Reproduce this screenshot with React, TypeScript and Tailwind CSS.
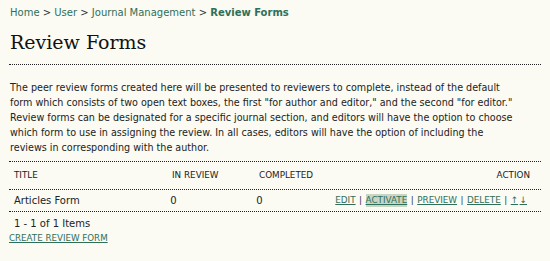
import React from "react";

const link = "text-[#2f6f5a]";

export default function App() {
  return (
    <div className="min-h-[261px] w-[550px] bg-[#fbfbf3] text-[#222] font-['DejaVu_Sans',sans-serif] text-[9.6px]">
      <div className="whitespace-nowrap pl-[10px] pt-[5px] text-[10px] leading-[15px]">
        <span className={link}>Home</span>
        <span className="text-[#333]"> &gt; </span>
        <span className={link}>User</span>
        <span className="text-[#333]"> &gt; </span>
        <span className={link}>Journal Management</span>
        <span className="text-[#333]"> &gt; </span>
        <span className={`${link} font-bold`}>Review Forms</span>
      </div>
      <div className="mx-[9px] mt-[10px] border-b border-dotted border-[#222] pb-[10px]">
        <h1 className="pl-[1px] font-['DejaVu_Serif',serif] text-[19px] leading-[24px] text-[#111]">Review Forms</h1>
      </div>
      <div className="whitespace-nowrap pl-[10px] pt-[15px] leading-[15px]">
        <div>The peer review forms created here will be presented to reviewers to complete, instead of the default</div>
        <div>form which consists of two open text boxes, the first "for author and editor," and the second "for editor."</div>
        <div>Review forms can be designated for a specific journal section, and editors will have the option to choose</div>
        <div>which form to use in assigning the review. In all cases, editors will have the option of including the</div>
        <div>reviews in corresponding with the author.</div>
      </div>
      <div className="mx-[9px] mt-[6px]">
        <div className="border-t border-dotted border-[#222]"></div>
        <div className="flex h-[27px] items-center text-[8.8px] text-[#222]">
          <div className="w-[163px] pl-[5px]">TITLE</div>
          <div className="w-[87px]">IN REVIEW</div>
          <div className="w-[80px]">COMPLETED</div>
          <div className="flex-1 pr-[11px] text-right">ACTION</div>
        </div>
        <div className="border-t border-dotted border-[#222]"></div>
        <div className="flex h-[21px] items-center text-[10px]">
          <div className="w-[163px] pl-[5px]">Articles Form</div>
          <div className="w-[87px]">0</div>
          <div className="w-[80px]">0</div>
          <div className="flex flex-1 items-center justify-end gap-[3.5px] whitespace-nowrap pr-[14px] text-[8.8px]">
            <span className={`${link} underline`}>EDIT</span>
            <span className="text-[#333]">|</span>
            <span className={`${link} bg-[#c8d6c2] underline`}>ACTIVATE</span>
            <span className="text-[#333]">|</span>
            <span className={`${link} underline`}>PREVIEW</span>
            <span className="text-[#333]">|</span>
            <span className={`${link} underline`}>DELETE</span>
            <span className="text-[#333]">|</span>
            <span className={`${link} underline`}>↑</span>
            <span className={`${link} -ml-[2px] underline`}>↓</span>
          </div>
        </div>
        <div className="border-t border-dotted border-[#222]"></div>
        <div className="pl-[5px] pt-[4px] text-[10px] leading-[15px]">1 - 1 of 1 Items</div>
        <div className="pl-[0px] text-[8.7px] leading-[14px]">
          <span className={`${link} underline`}>CREATE REVIEW FORM</span>
        </div>
      </div>
    </div>
  );
}
